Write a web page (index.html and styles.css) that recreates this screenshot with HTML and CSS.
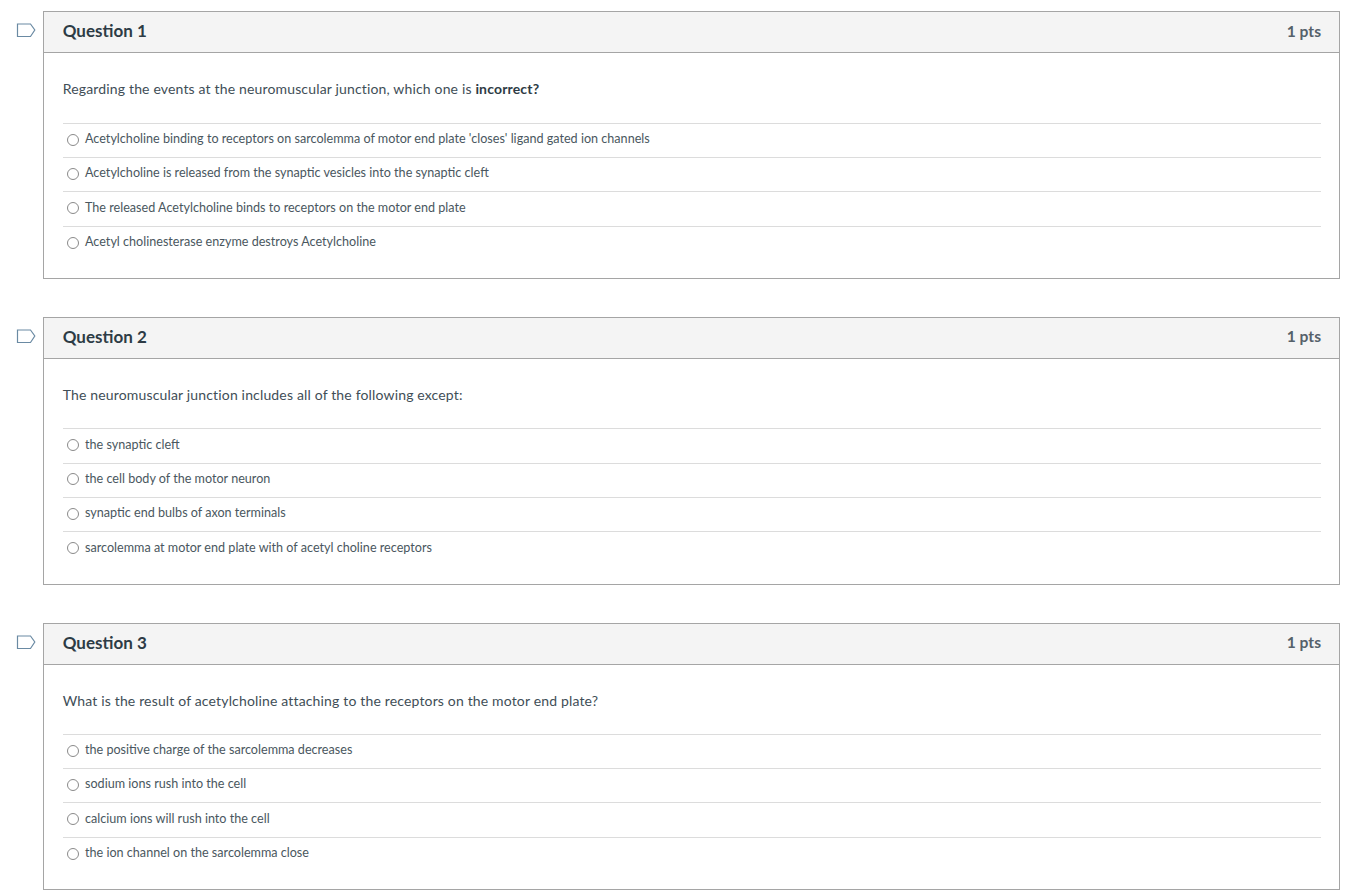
FILE: index.html
```html
<!DOCTYPE html>
<html lang="en">
<head>
    <meta charset="UTF-8">
    <meta name="viewport" content="width=device-width, initial-scale=1.0">
    <title>Quiz</title>
    <link rel="stylesheet" href="styles.css">
</head>
<body>
    <!-- Question 1 -->
    <div class="question">
        <svg class="flag" width="21" height="15" viewBox="0 0 21 15"><path d="M1.500 1H14.500L18.800 7L14.500 13.500H1.500Z"/></svg>
        <div class="card">
            <div class="card-header">
                <span class="card-title">Question 1</span>
                <span class="card-pts">1 pts</span>
            </div>
            <div class="card-body">
                <p class="question-text">Regarding the events at the neuromuscular junction, which one is <strong>incorrect?</strong></p>
                <div class="answers">
                    <label class="answer"><span class="radio"></span>Acetylcholine binding to receptors on sarcolemma of motor end plate 'closes' ligand gated ion channels</label>
                    <label class="answer"><span class="radio"></span>Acetylcholine is released from the synaptic vesicles into the synaptic cleft</label>
                    <label class="answer"><span class="radio"></span>The released Acetylcholine binds to receptors on the motor end plate</label>
                    <label class="answer"><span class="radio"></span>Acetyl cholinesterase enzyme destroys Acetylcholine</label>
                </div>
            </div>
        </div>
    </div>

    <!-- Question 2 -->
    <div class="question">
        <svg class="flag" width="21" height="15" viewBox="0 0 21 15"><path d="M1.500 1H14.500L18.800 7L14.500 13.500H1.500Z"/></svg>
        <div class="card">
            <div class="card-header">
                <span class="card-title">Question 2</span>
                <span class="card-pts">1 pts</span>
            </div>
            <div class="card-body">
                <p class="question-text">The neuromuscular junction includes all of the following except:</p>
                <div class="answers">
                    <label class="answer"><span class="radio"></span>the synaptic cleft</label>
                    <label class="answer"><span class="radio"></span>the cell body of the motor neuron</label>
                    <label class="answer"><span class="radio"></span>synaptic end bulbs of axon terminals</label>
                    <label class="answer"><span class="radio"></span>sarcolemma at motor end plate with of acetyl choline receptors</label>
                </div>
            </div>
        </div>
    </div>

    <!-- Question 3 -->
    <div class="question">
        <svg class="flag" width="21" height="15" viewBox="0 0 21 15"><path d="M1.500 1H14.500L18.800 7L14.500 13.500H1.500Z"/></svg>
        <div class="card">
            <div class="card-header">
                <span class="card-title">Question 3</span>
                <span class="card-pts">1 pts</span>
            </div>
            <div class="card-body">
                <p class="question-text">What is the result of acetylcholine attaching to the receptors on the motor end plate?</p>
                <div class="answers">
                    <label class="answer"><span class="radio"></span>the positive charge of the sarcolemma decreases</label>
                    <label class="answer"><span class="radio"></span>sodium ions rush into the cell</label>
                    <label class="answer"><span class="radio"></span>calcium ions will rush into the cell</label>
                    <label class="answer"><span class="radio"></span>the ion channel on the sarcolemma close</label>
                </div>
            </div>
        </div>
    </div>
</body>
</html>
```

FILE: styles.css
```css
body {
    margin: 0;
    padding: 11.400px 6px 0 43px;
    font-family: Lato, "Noto Sans", sans-serif;
    color: #2d3b45;
    background: #fff;
}
.question {
    position: relative;
    margin-bottom: 38px;
}
.flag {
    position: absolute;
    left: -27px;
    top: 12px;
}
.flag path {
    fill: #fff;
    stroke: #6a8aa3;
    stroke-width: 1.200;
}
.card {
    border: 1px solid #a5a5a5;
}
.card-header {
    display: flex;
    justify-content: space-between;
    align-items: center;
    height: 38px;
    padding: 0 18px 2px 18.700px;
    background: #f4f4f4;
    border-bottom: 1px solid #a5a5a5;
}
.card-title {
    margin-bottom: 1px;
    font-size: 17px;
    font-weight: 700;
}
.card-pts {
    margin-bottom: 1px;
    font-size: 15.600px;
    font-weight: 700;
    color: #56616a;
}
.card-body {
    padding: 0 18px 0 19px;
}
.question-text {
    margin: 0 0 0 -0.300px;
    padding: 27px 0 24.200px;
    font-size: 14px;
    line-height: 18px;
    letter-spacing: 0.160px;
    color: #414e57;
}
.question-text strong {
    color: #2d3b45;
}
.answers {
    padding-bottom: 18.100px;
}
.answer {
    display: flex;
    align-items: flex-start;
    height: 25.940px;
    padding: 7.400px 0 0 4px;
    border-top: 1px solid #dcdcdc;
    font-size: 12.600px;
    line-height: 16px;
    color: #4a5760;
}
.radio {
    flex: none;
    box-sizing: border-box;
    width: 12px;
    height: 12px;
    margin: 2.600px 6px 0 0;
    border: 1px solid #8a8a8a;
    border-radius: 50%;
}
```
